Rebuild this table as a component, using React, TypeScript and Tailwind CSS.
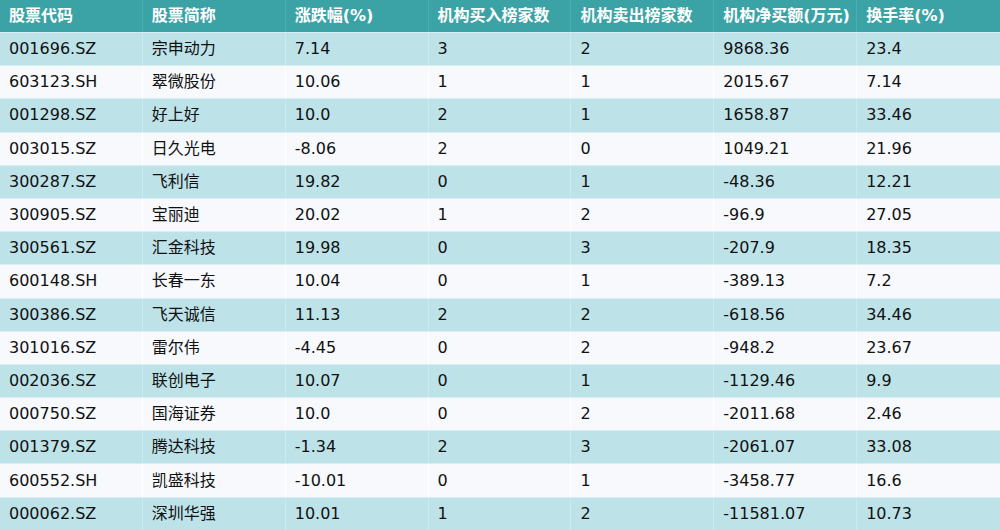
const headers = ["股票代码", "股票简称", "涨跌幅(%)", "机构买入榜家数", "机构卖出榜家数", "机构净买额(万元)", "换手率(%)"];

const rows: string[][] = [
  ["001696.SZ", "宗申动力", "7.14", "3", "2", "9868.36", "23.4"],
  ["603123.SH", "翠微股份", "10.06", "1", "1", "2015.67", "7.14"],
  ["001298.SZ", "好上好", "10.0", "2", "1", "1658.87", "33.46"],
  ["003015.SZ", "日久光电", "-8.06", "2", "0", "1049.21", "21.96"],
  ["300287.SZ", "飞利信", "19.82", "0", "1", "-48.36", "12.21"],
  ["300905.SZ", "宝丽迪", "20.02", "1", "2", "-96.9", "27.05"],
  ["300561.SZ", "汇金科技", "19.98", "0", "3", "-207.9", "18.35"],
  ["600148.SH", "长春一东", "10.04", "0", "1", "-389.13", "7.2"],
  ["300386.SZ", "飞天诚信", "11.13", "2", "2", "-618.56", "34.46"],
  ["301016.SZ", "雷尔伟", "-4.45", "0", "2", "-948.2", "23.67"],
  ["002036.SZ", "联创电子", "10.07", "0", "1", "-1129.46", "9.9"],
  ["000750.SZ", "国海证券", "10.0", "0", "2", "-2011.68", "2.46"],
  ["001379.SZ", "腾达科技", "-1.34", "2", "3", "-2061.07", "33.08"],
  ["600552.SH", "凯盛科技", "-10.01", "0", "1", "-3458.77", "16.6"],
  ["000062.SZ", "深圳华强", "10.01", "1", "2", "-11581.07", "10.73"],
];

const font = "font-['DejaVu_Sans','Noto_Sans_CJK_SC',sans-serif]";

export default function App() {
  return (
    <div className={`w-[1000px] h-[530px] overflow-hidden bg-[#f7f9fc] ${font}`}>
      <div className="grid grid-cols-7 h-[32px] bg-[#3ba3a6]">
        {headers.map((h) => (
          <div key={h} className="flex items-center pl-[9px] text-[16px] font-bold text-white border-r border-[#4aaeb1] last:border-r-0 whitespace-nowrap">
            {h}
          </div>
        ))}
      </div>
      {rows.map((r, i) => (
        <div key={r[0]} className={`grid grid-cols-7 h-[33.2px] border-t border-[#d8eef2] ${i % 2 === 0 ? "bg-[#bde3e9]" : "bg-[#f7f9fc]"}`}>
          {r.map((c, j) => (
            <div key={j} className={`flex items-center pl-[9px] text-[16px] text-[#111] border-r last:border-r-0 whitespace-nowrap ${i % 2 === 0 ? "border-[#cdeaef]" : "border-white"}`}>
              {c}
            </div>
          ))}
        </div>
      ))}
    </div>
  );
}
